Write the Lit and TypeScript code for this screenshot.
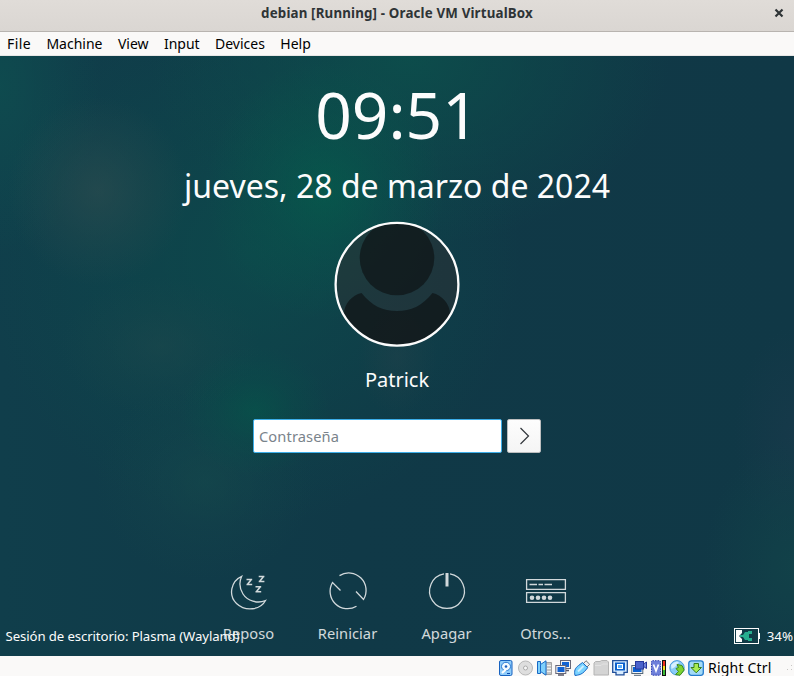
import { LitElement, html, svg, css } from "lit";
import { customElement } from "lit/decorators.js";

const menus = ["File", "Machine", "View", "Input", "Devices", "Help"];

const actions = [
  {
    label: "Reposo",
    icon: svg`<path d="M16.700 9.300C6 14 3 28.500 11.500 36.500C20.500 45 35.500 43 40.500 33.500C32.500 37 22.500 34 18 27C14.300 21 14 15 16.700 9.300Z"/><g class="thick"><path d="M21.500 12.500H27.200M21.500 17.500H27.200M26 13L22.700 17M33.700 9.500H39.400M33.700 14.500H39.400M38.200 10L34.900 14M30.500 19.700H36.200M30.500 24.700H36.200M35 20.200L31.700 24.200"/></g>`,
  },
  {
    label: "Reiniciar",
    icon: svg`<path d="M15.500 8.600A17.400 17.400 0 0 1 39.500 32.500L32 24.500M32.500 39.200A17.400 17.400 0 0 1 8.500 15.500L16.500 23.500"/>`,
  },
  {
    label: "Apagar",
    icon: svg`<path d="M27 6.900A17.400 17.400 0 1 1 21 6.900"/><path class="bar" d="M24 6V19.500"/>`,
  },
  {
    label: "Otros...",
    icon: svg`<path d="M4.600 12.600H43.400V22.400H4.600ZM4.600 25.600H43.400V35.400H4.600Z"/><path class="thick" d="M7.500 17.500H15M16.500 17.500H21M22.500 17.500H30"/><g class="dots"><circle cx="10" cy="30.700" r="2.300"/><circle cx="16" cy="30.700" r="2.300"/><circle cx="22" cy="30.700" r="2.300"/><circle cx="28" cy="30.700" r="2.300"/></g>`,
  },
];

const devices = [
  // hard disk
  svg`<rect x="1.500" y=".5" width="12.500" height="15" rx="1.500" fill="#8fccfa" stroke="#1762c0"/><ellipse cx="8" cy="6.500" rx="4.500" ry="4.200" fill="#f2faff" stroke="#2879d4"/><circle cx="8" cy="6.500" r="1.300" fill="#1a5ec0"/><path d="M4 13L8 9.500" stroke="#fff" stroke-width="2"/><path d="M9 13.500H12" stroke="#0c4bb0"/>`,
  // optical disc
  svg`<circle cx="8.500" cy="8" r="7" fill="#dedede" stroke="#b8b8b8"/><circle cx="8.500" cy="8" r="2" fill="#f8f8f8" stroke="#aaa"/>`,
  // audio
  svg`<path d="M8 2.500H15.500V14.500H8Z" fill="#c4c4c4" stroke="#a2a2a2"/><path d="M11 5.500H15M11 8.500H15M11 11.500H15" stroke="#efefef"/><path d="M1.500 1.500H4.500V4.500L10 .8V15.200L4.500 11.500V13.500H1.500Z" fill="#7fd0fc" stroke="#1869c4"/><path d="M4.500 4.500V11.500" stroke="#1869c4"/>`,
  // network
  svg`<rect x="5.500" y=".5" width="10" height="8" fill="#f2f2f2" stroke="#667"/><rect x="7" y="2" width="7" height="5" fill="#1263d4"/><path d="M11 10.500H14" stroke="#556" stroke-width="1.500"/><rect x=".8" y="5.500" width="10" height="8" fill="#f4f4f4" stroke="#667"/><rect x="2.500" y="7" width="7" height="5" fill="#1263d4"/><path d="M3 15H9" stroke="#556" stroke-width="1.500"/>`,
  // USB plug
  svg`<path d="M9.500 3.500L12 .7L15.700 4.300L13 7Z" fill="#eee" stroke="#777"/><path d="M1 15.500C0 11 .8 8.500 4.500 5.500L8.500 2.500L13.700 7.700L10.500 11.500C7.500 14.500 5 15 1 15.500Z" fill="#79d2ff" stroke="#1869c4"/><path d="M4 11.500L9.500 6" stroke="#cdefff" stroke-width="2"/>`,
  // shared folder
  svg`<path d="M1 15V3L2.500 1.500H7L8.500 .5H14L15.500 2V15H1Z" fill="#d4d4d4" stroke="#b4b4b4"/><path d="M2 5.500H8L9.500 4H15" stroke="#e2e2e2"/>`,
  // display
  svg`<path d="M.7 .7H15.300V12.300H12V14.800H4V12.300H.7Z" fill="#d9edff" stroke="#214f9a" stroke-width="1.300"/><rect x="3" y="2.500" width="10" height="8" fill="#0b5fcb"/><rect x="5.500" y="4.500" width="5" height="4" fill="#5cb0ff" stroke="#fff"/>`,
  // recording
  svg`<rect x=".8" y="5.500" width="11" height="8" fill="#f0f4f8" stroke="#567"/><rect x="2" y="7" width="8.500" height="5" fill="#0b62d3"/><path d="M3 15.300H10" stroke="#567"/><rect x="4.500" y="1.500" width="8" height="7.500" fill="#4a61cb" stroke="#26379b"/><path d="M12.500 4L15.500 2V8.500L12.500 6.500Z" fill="#6e83df" stroke="#26379b"/>`,
  // virtual processor
  svg`<rect x="1.500" y=".7" width="9" height="14.500" rx="1" fill="#6f80da" stroke="#3040b0" stroke-dasharray="1.500 1"/><path d="M3.500 4.500L6 11L8.500 4.500" stroke="#fff" stroke-width="1.700"/><rect x="12" y="0" width="4" height="16" fill="#111"/><rect x="13" y="1" width="2" height="5" fill="#f03020"/><rect x="13" y="6" width="2" height="4" fill="#f4df20"/><rect x="13" y="10" width="2" height="5" fill="#3cba38"/>`,
  // mouse integration
  svg`<circle cx="8" cy="7.800" r="7.200" fill="#8accf8" stroke="#4a9bdc"/><path d="M2 5Q6 0 10 2L6 7L2.500 9" fill="#d7f0ff"/><path d="M8 4.500L13 5.500L15.200 10L11 15.300L6.500 14.500L9.500 11.500L7 8.500L9.500 7.500Z" fill="#7dd331" stroke="#3e8b1a"/>`,
  // host key capture
  svg`<rect x=".8" y=".8" width="14.500" height="14.500" rx="2.500" fill="#a3daf7" stroke="#247bcd" stroke-width="1.300"/><path d="M6 3.500H10.500V7.500H13.500L8.200 12.800L3 7.500H6Z" fill="#a9ec53" stroke="#377d1b"/>`,
];

@customElement("app-root")
export class AppRoot extends LitElement {
  static styles = css`
    :host {
      display: flex;
      flex-direction: column;
      width: 794px;
      height: 676px;
      overflow: hidden;
      font-family: "Noto Sans", sans-serif;
      background: #faf9f8;
    }
    svg {
      display: block;
      fill: none;
      flex: none;
    }
    .title {
      box-sizing: border-box;
      height: 32px;
      flex: none;
      display: grid;
      grid-template-columns: 30px 1fr 30px;
      align-items: center;
      justify-items: center;
      background: linear-gradient(#e0dcd8, #dad6d2);
      border-bottom: 1px solid #b8b4b0;
      color: #2e3436;
      padding-bottom: 5px;
    }
    .title b {
      grid-column: 2;
      font-size: 13.330px;
      letter-spacing: 0.16px;
      line-height: 20px;
      white-space: nowrap;
    }
    .menu {
      box-sizing: border-box;
      height: 24px;
      flex: none;
      display: flex;
      gap: 15.400px;
      padding-left: 7px;
      line-height: 23px;
      font-size: 14px;
      color: #000;
      border-bottom: 1px solid #e8e7e6;
    }
    .menu span:first-child {
      letter-spacing: 0.4px;
    }
    .guest {
      box-sizing: border-box;
      position: relative;
      height: 600px;
      flex: none;
      overflow: hidden;
      display: flex;
      flex-direction: column;
      align-items: center;
      padding-top: 15px;
      color: #fcfcfc;
      background:
        radial-gradient(ellipse 90px 95px at 98px 135px, rgba(44, 76, 79, 0.65), rgba(44, 76, 79, 0.3) 50%, rgba(44, 76, 79, 0)),
        radial-gradient(ellipse 120px 130px at 325px 135px, rgba(5, 93, 76, 0.7), rgba(5, 93, 76, 0.3) 50%, rgba(5, 93, 76, 0)),
        radial-gradient(ellipse 75px 65px at 255px 355px, rgba(6, 84, 74, 0.7), rgba(6, 84, 74, 0.28) 50%, rgba(6, 84, 74, 0)),
        radial-gradient(ellipse 110px 100px at 205px 425px, rgba(22, 74, 76, 0.55), rgba(22, 74, 76, 0.22) 50%, rgba(22, 74, 76, 0)),
        radial-gradient(ellipse 100px 70px at 160px 290px, rgba(30, 72, 76, 0.5), rgba(30, 72, 76, 0.2) 50%, rgba(30, 72, 76, 0)),
        radial-gradient(ellipse 40px 60px at 397px 300px, rgba(38, 66, 74, 0.4), rgba(38, 66, 74, 0)),
        radial-gradient(ellipse 260px 190px at 410px 0px, rgba(12, 80, 76, 0.85), rgba(12, 80, 76, 0.4) 50%, rgba(12, 80, 76, 0)),
        radial-gradient(ellipse 270px 270px at 250px 200px, rgba(12, 76, 76, 0.75), rgba(12, 76, 76, 0.38) 50%, rgba(12, 76, 76, 0)),
        radial-gradient(ellipse 100px 170px at 0px 30px, rgba(14, 80, 80, 0.7), rgba(14, 80, 80, 0)),
        radial-gradient(ellipse 90px 130px at 794px 510px, rgba(18, 70, 74, 0.65), rgba(18, 70, 74, 0)),
        radial-gradient(ellipse 60px 110px at 794px 380px, rgba(26, 58, 76, 0.6), rgba(26, 58, 76, 0)),
        linear-gradient(90deg, #103e4b, #103947 45%, #103846);
    }
    .time {
      font-size: 64px;
      line-height: 88px;
    }
    .date {
      font-size: 32px;
      line-height: 44px;
      margin-top: 5px;
    }
    .avatar {
      margin-top: 13px;
    }
    .name {
      font-size: 20px;
      line-height: 28px;
      margin-top: 19px;
    }
    .login {
      display: flex;
      gap: 5px;
      margin-top: 25px;
    }
    .field,
    .go {
      box-sizing: border-box;
      height: 34px;
      border-radius: 2px;
    }
    .field {
      width: 249px;
      padding-left: 5px;
      border: 1px solid #3daee9;
      background: #fff;
      color: #7a838b;
      font-size: 14.670px;
      letter-spacing: 0.1px;
      line-height: 33px;
    }
    .go {
      width: 34px;
      border: 1px solid #bcbebf;
      background: linear-gradient(#fdfdfd, #f5f5f5);
      stroke: #31363b;
    }
    .actions {
      display: grid;
      grid-template-columns: repeat(4, 99px);
      margin-top: 114px;
    }
    .action {
      display: flex;
      flex-direction: column;
      align-items: center;
      gap: 8px;
      font-size: 14.670px;
      letter-spacing: 0.04px;
      line-height: 20px;
      opacity: 0.82;
      stroke-width: 1.300;
    }
    .action svg {
      stroke: #fcfcfc;
    }
    .thick {
      stroke-width: 1.600;
    }
    .bar {
      stroke-width: 3;
    }
    .dots {
      fill: #fcfcfc;
      stroke: none;
    }
    .footer {
      position: absolute;
      left: 5.500px;
      right: 1px;
      bottom: 10px;
      display: flex;
      align-items: center;
      font-size: 13.330px;
      line-height: 20px;
      white-space: nowrap;
    }
    .session {
      font-size: 13.200px;
      letter-spacing: -0.1px;
    }
    .battery {
      margin-left: auto;
      margin-right: 6px;
    }
    .status {
      flex: 1;
      display: flex;
      align-items: center;
      gap: 3px;
      padding: 4px 0 0 498px;
      font-size: 14px;
      line-height: 16px;
      color: #000;
    }
    .status span {
      white-space: nowrap;
      margin-left: 1px;
      letter-spacing: 0.2px;
    }
    .grip {
      margin-left: auto;
    }
  `;

  render() {
    return html`
      <div class="title">
        <b>debian [Running] - Oracle VM VirtualBox</b>
        <svg width="10" height="10" stroke="#2e3436" stroke-width="2.2"><path d="M1.500 1.500L8.500 8.500M8.500 1.500L1.500 8.500" /></svg>
      </div>
      <div class="menu">${menus.map((m) => html`<span>${m}</span>`)}</div>
      <div class="guest">
        <div class="time">09:51</div>
        <div class="date">jueves, 28 de marzo de 2024</div>
        <svg class="avatar" width="126" height="126" viewBox="0 0 126 126">
          <clipPath id="face"><circle cx="63" cy="63.300" r="61" /></clipPath>
          <g clip-path="url(#face)">
            <rect width="126" height="126" fill="#2c3033" fill-opacity=".55" />
            <g fill="#0c0e10" fill-opacity=".62">
              <circle cx="63" cy="37" r="37.300" />
              <path d="M27.500 72C38 85 49 90 63 90S88 85 98.500 72C108 74 116 83 116 93V126H10V93C10 83 18 74 27.500 72Z" />
            </g>
          </g>
          <circle cx="63" cy="63.200" r="61.400" stroke="#fcfcfc" stroke-width="2.300" />
        </svg>
        <div class="name">Patrick</div>
        <div class="login">
          <div class="field">Contraseña</div>
          <div class="go"><svg width="32" height="32"><path d="M12.500 8L20.500 16L12.500 24" stroke-width="1.200" /></svg></div>
        </div>
        <div class="actions">
          ${actions.map(
            (a) => html`<div class="action"><svg width="48" height="48">${a.icon}</svg><span>${a.label}</span></div>`
          )}
        </div>
        <div class="footer">
          <span class="session">Sesión de escritorio: Plasma (Wayland)</span>
          <svg class="battery" width="27" height="16">
            <rect x=".5" y=".5" width="24" height="15" stroke="#fcfcfc" />
            <path d="M2 2H8V5L5 8L8 11V14H2Z" fill="#fcfcfc" />
            <path d="M25.500 5V11" stroke="#fcfcfc" />
            <path d="M6 7H9L11 4H14V3H18V6H15V10H18V13H14V12H11L9 9H6Z" fill="#27ae8f" />
          </svg>
          <span>34%</span>
        </div>
      </div>
      <div class="status">
        ${devices.map((d) => html`<svg width="16" height="16">${d}</svg>`)}
        <span>Right Ctrl</span>
        <svg class="grip" width="8" height="12"><path fill="#c8c6c4" d="M5 3h1v1h-1zM5 7h1v1h-1zM1 7h1v1h-1z" /></svg>
      </div>
    `;
  }
}
